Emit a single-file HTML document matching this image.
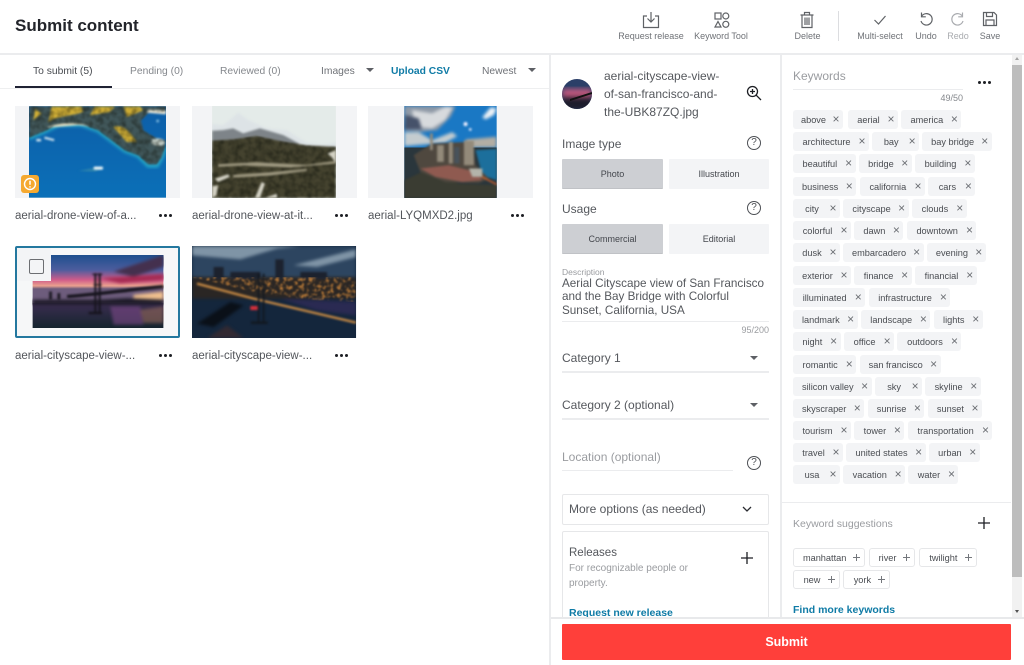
<!DOCTYPE html>
<html><head><meta charset="utf-8"><title>Submit content</title>
<style>
*{box-sizing:border-box}
html,body{margin:0;padding:0}
body{width:1024px;height:665px;position:relative;overflow:hidden;background:#fff;font-family:"Liberation Sans",sans-serif;color:#44474d}
#w{position:absolute;left:0;top:0;width:1024px;height:665px;overflow:hidden;background:#fff;filter:blur(.3px)}
.a{position:absolute;white-space:nowrap}
.c{transform:translateX(-50%)}
.ln{position:absolute;background:#ebecee}
.tl{font-size:9px;color:#6f7277;line-height:11px;top:30.500px}
.ic{position:absolute;fill:none;stroke:#5f6266;stroke-width:1.2}
.tab{font-size:10.300px;top:65.500px;line-height:12px;color:#85888d}
.fn{font-size:11.500px;line-height:14px;color:#53565b}
.thumb{position:absolute;background:#f3f4f6;height:92px;width:165px}
.thumb svg{position:absolute;display:block}
.dots{position:absolute;width:13px;height:3px}
.dots i{position:absolute;top:0;width:3px;height:3px;border-radius:50%;background:#1d1f24}
.dots i:nth-child(1){left:0}.dots i:nth-child(2){left:5px}.dots i:nth-child(3){left:10px}
.lab{font-size:12px;line-height:15px;color:#55585d;left:562px}
.btn{position:absolute;height:30px;width:101px;background:#f3f4f6;font-size:9px;line-height:30px;text-align:center;color:#44474d;border-radius:1px}
.btn.on{background:#cdcfd3;border-bottom:1px solid #c0c2c6}
.row{position:absolute;left:793px;display:flex;gap:3.4px;height:19px}
.row b{display:block;position:relative;height:19px;background:#f3f4f6;border-radius:3px;font-weight:400;font-size:9.200px;line-height:20px;color:#4a4d52;text-align:center;padding-right:12px;padding-left:3px;white-space:nowrap}
.row b::after{content:"\00d7";position:absolute;right:3px;top:0;width:8px;text-align:center;font-size:12px;line-height:19px;color:#6b6e73}
.row.s b{background:#fff;border:1px solid #e6e7e9;line-height:18px}
.row.s b::after{content:"";top:5px;right:4.500px;width:7px;height:7px;background:linear-gradient(#74777c,#74777c) center/7px 1px no-repeat,linear-gradient(#74777c,#74777c) center/1px 7px no-repeat}
.q{position:absolute;width:14px;height:14px;border:1.2px solid #4d5055;border-radius:50%;font-size:10px;line-height:12px;text-align:center;color:#4d5055}
.car{position:absolute;width:0;height:0;border-left:4px solid transparent;border-right:4px solid transparent;border-top:4px solid #5d6065}
.blue{color:#0f7ba6;font-weight:700}
</style></head><body><div id="w">

<svg style="position:absolute;width:0;height:0"><defs>
<filter id="b3" color-interpolation-filters="sRGB"><feGaussianBlur stdDeviation="5"/></filter>
<filter id="b2" color-interpolation-filters="sRGB"><feGaussianBlur stdDeviation="3"/></filter>
<filter id="dk" x="0" y="0" width="1" height="1" color-interpolation-filters="sRGB"><feTurbulence type="fractalNoise" baseFrequency=".06" numOctaves="2" seed="3"/><feColorMatrix values="0 0 0 0 .07 0 0 0 0 .08 0 0 0 0 .05 1.600 0 0 0 -.550"/><feComposite in2="SourceAlpha" operator="in"/><feGaussianBlur stdDeviation="2"/></filter>
<filter id="yl" x="0" y="0" width="1" height="1" color-interpolation-filters="sRGB"><feTurbulence type="fractalNoise" baseFrequency=".05" numOctaves="2" seed="8"/><feColorMatrix values="0 0 0 0 .82 0 0 0 0 .68 0 0 0 0 .20 2 0 0 0 -.850"/><feComposite in2="SourceAlpha" operator="in"/><feGaussianBlur stdDeviation="2.500"/></filter>
<filter id="or" x="0" y="0" width="1" height="1" color-interpolation-filters="sRGB"><feTurbulence type="fractalNoise" baseFrequency=".08" numOctaves="2" seed="5"/><feColorMatrix values="0 0 0 0 .90 0 0 0 0 .58 0 0 0 0 .24 3.500 0 0 0 -1.600"/><feComposite in2="SourceAlpha" operator="in"/><feGaussianBlur stdDeviation="2"/></filter>
<linearGradient id="sea" x1="0" y1="0" x2="0" y2="1"><stop offset="0" stop-color="#0d5ea8"/><stop offset="1" stop-color="#0b70b8"/></linearGradient>
<linearGradient id="sk" x1="0" y1="0" x2="0" y2="1"><stop offset="0" stop-color="#1d4f8e"/><stop offset=".3" stop-color="#4d5d9e"/><stop offset=".5" stop-color="#d05c8a"/><stop offset=".62" stop-color="#e9a08e"/><stop offset=".68" stop-color="#6d5c7c"/></linearGradient>
<linearGradient id="wa" x1="0" y1="0" x2="0" y2="1"><stop offset="0" stop-color="#3b2d50"/><stop offset="1" stop-color="#15242e"/></linearGradient>
</defs></svg>

<!-- header -->
<div class="a" style="left:15px;top:15px;font-size:17px;line-height:22px;font-weight:700;color:#23252b">Submit content</div>

<svg class="ic" style="left:642px;top:11px" width="18" height="18" viewBox="0 0 18 18"><path d="M5 5H1.500V16.500H16.500V5H13M9 1V11M5.500 7.500L9 11L12.500 7.500"/></svg>
<div class="a c tl" style="left:651px">Request release</div>
<svg class="ic" style="left:713px;top:11px" width="18" height="18" viewBox="0 0 18 18"><rect x="2" y="2" width="6" height="6"/><circle cx="12.800" cy="5" r="3"/><path d="M5 10.500L8 16H2Z"/><circle cx="12.800" cy="13.300" r="3"/></svg>
<div class="a c tl" style="left:721px">Keyword Tool</div>
<svg class="ic" style="left:799px;top:11px" width="16" height="18" viewBox="0 0 16 18"><path d="M1.500 4H14.500M5.500 4V1.500H10.500V4M3 4V16.500H13V4M6 6.500V14M8 6.500V14M10 6.500V14"/></svg>
<div class="a c tl" style="left:807.500px">Delete</div>
<div class="ln" style="left:838px;top:11px;width:1px;height:30px;background:#dcdde0"></div>
<svg class="ic" style="left:873px;top:14px" width="14" height="12" viewBox="0 0 14 12"><path d="M1.500 6L5.500 10L12.500 2"/></svg>
<div class="a c tl" style="left:880px">Multi-select</div>
<svg class="ic" style="left:918px;top:11px" width="16" height="16" viewBox="0 0 16 16"><path d="M3.500 5.500A5.700 5.700 0 1 1 3 10M3.500 1.500V5.800H7.800"/></svg>
<div class="a c tl" style="left:926px">Undo</div>
<svg class="ic" style="left:950px;top:11px;stroke:#a9abaf" width="16" height="16" viewBox="0 0 16 16"><path d="M12.500 5.500A5.700 5.700 0 1 0 13 10M12.500 1.500V5.800H8.200"/></svg>
<div class="a c tl" style="left:958px;color:#a9abaf">Redo</div>
<svg class="ic" style="left:982px;top:11px" width="16" height="16" viewBox="0 0 16 16"><path d="M1.500 1.500H12L14.500 4V14.500H1.500ZM4.500 1.500V5.500H10.500V1.500M4 14.500V9H12V14.500"/></svg>
<div class="a c tl" style="left:990px">Save</div>

<div class="ln" style="left:0;top:53px;width:1024px;height:2px"></div>

<!-- tabs -->
<div class="a tab" style="left:33px;color:#4a4d52">To submit (5)</div>
<div class="a tab" style="left:130px">Pending (0)</div>
<div class="a tab" style="left:220px">Reviewed (0)</div>
<div class="a tab" style="left:321px;color:#6f7277">Images</div>
<div class="car" style="left:366px;top:68px"></div>
<div class="a tab blue" style="left:391px">Upload CSV</div>
<div class="a tab" style="left:482px;color:#6f7277">Newest</div>
<div class="car" style="left:528px;top:68px"></div>
<div class="ln" style="left:0;top:87.500px;width:549px;height:1px;background:#eeeff0"></div>
<div class="a" style="left:15px;top:86px;width:97px;height:2px;background:#1f2233"></div>

<!-- thumb 1 -->
<div class="thumb" style="left:15px;top:106px">
<svg style="left:14px;top:0" width="137" height="92" viewBox="42 18 411 274">
<rect x="42" y="18" width="411" height="274" fill="url(#sea)"/>
<path d="M42 112L90 92L130 72H200L250 90L290 120L330 150L370 165L400 195H425L440 170L450 140" fill="none" stroke="#24a6c8" stroke-width="14" filter="url(#b3)"/>
<g filter="url(#b2)">
<path d="M42 18H453V35L400 38L378 60L385 90L420 112L453 120L450 140L440 170L425 192H400L370 165L330 150L290 120L250 90L200 72H130L90 92L42 112Z" fill="#41575a"/>
<path d="M100 66C125 45 170 50 205 34L200 18H110ZM295 80C325 70 345 95 365 125L335 125ZM225 45L285 35L300 18H240ZM335 50L385 30L375 18H325ZM55 60L80 40L60 25Z" fill="#cfae36"/>
<path d="M95 82C130 66 190 64 225 78L190 74L120 80Z" fill="#ece4c4"/>
<path d="M395 37L453 42V30L400 28Z" fill="#ece8d6"/>
<path d="M410 118C430 108 452 118 450 130C440 140 425 138 410 130Z" fill="#bfcbc4"/>
</g>
<path d="M42 18H453V35L400 38L378 60L385 90L420 112L453 120L450 140L440 170L425 192H400L370 165L330 150L290 120L250 90L200 72H130L90 92L42 112Z" fill="#000" filter="url(#dk)" opacity=".6"/>
<path d="M190 212L240 202L262 204L240 214Z" fill="#2d83ad" filter="url(#b2)"/>
<g filter="url(#b2)"><rect x="236" y="199" width="28" height="9" rx="3" fill="#f0f8fa"/><rect x="88" y="112" width="30" height="6" fill="#dcecf3" transform="rotate(15 100 115)"/><rect x="64" y="116" width="14" height="7" fill="#dcecf3"/><circle cx="428" cy="62" r="4" fill="#8cc4e4"/></g>
</svg>
<div class="a" style="left:6px;top:69px;width:18px;height:18px;background:#f5a930;border-radius:3px"></div>
<svg class="a" style="left:8px;top:71px" width="14" height="14" viewBox="0 0 14 14"><circle cx="7" cy="7" r="5.500" fill="none" stroke="#fff" stroke-width="1.400"/><path d="M7 3.800V7.800M7 9.300V10.500" stroke="#fff" stroke-width="1.500"/></svg>
</div>
<div class="a fn" style="left:15px;top:209px">aerial-drone-view-of-a...</div>
<div class="dots" style="left:159px;top:214px"><i></i><i></i><i></i></div>

<!-- thumb 2 -->
<div class="thumb" style="left:192px;top:106px">
<svg style="left:20px;top:0" width="124" height="92" viewBox="67 18 370 275">
<rect x="67" y="18" width="370" height="275" fill="#e4ebe9"/>
<g filter="url(#b2)">
<path d="M67 72L100 75L120 60L145 38L175 60L230 85L290 90L350 128L400 134L437 128V150H67Z" fill="#dde3e6"/>
<path d="M67 92L100 90L130 85L160 100L210 85L280 105L330 132H67Z" fill="#7e8489"/>
<path d="M67 122L130 118L200 108L280 125L350 136L437 140V293H67Z" fill="#45432f"/>
</g>
<path d="M67 122L130 118L200 108L280 125L350 136L437 140V293H67Z" fill="#000" filter="url(#dk)" opacity=".7"/>
<g filter="url(#b2)">
<path d="M85 192L200 186L350 194L437 182V190L300 202L160 196L85 200ZM130 224L240 216L350 206V212L240 226L130 232Z" fill="#a09a82"/>
<path d="M67 258L85 255L80 285L67 293ZM195 293L215 245L225 250L210 293ZM225 293L260 280L262 293ZM412 160L437 150V188L425 172ZM75 235L115 222L120 230L85 245Z" fill="#d5d3c6"/>
</g>
</svg>
</div>
<div class="a fn" style="left:192px;top:209px">aerial-drone-view-at-it...</div>
<div class="dots" style="left:335px;top:214px"><i></i><i></i><i></i></div>

<!-- thumb 3 -->
<div class="thumb" style="left:368px;top:106px">
<svg style="left:36px;top:0" width="93" height="92" viewBox="117 18 276 275">
<rect x="117" y="18" width="276" height="275" fill="#1a78c4"/>
<g filter="url(#b3)">
<path d="M117 18H270L255 50L215 90L170 95L117 92Z" fill="#8f99a6"/>
<path d="M140 30L200 40L240 20L262 22L240 60L200 85L150 80Z" fill="#d7dadd"/>
<path d="M120 45L160 55L170 88L117 88Z" fill="#46526a"/>
<path d="M350 52L375 22L393 25L385 45L360 58Z" fill="#eef2f6"/>
<path d="M117 96L160 96L200 120L260 96L275 108L240 128L117 138Z" fill="#c4cccf"/>
<path d="M300 118L393 110V142H300Z" fill="#b3aea4"/>
</g>
<path d="M117 142H393V293H117Z" fill="#2a363c"/>
<g filter="url(#b2)">
<path d="M330 150L393 146V240L350 225Z" fill="#1c6f9c"/>
<path d="M117 240L170 215L280 250L393 255V293H117Z" fill="#3a3c32"/>
<path d="M145 165L200 130L320 125L330 195L370 235L340 248L240 245L165 215Z" fill="#4f483f"/>
<path d="M165 205L250 195L330 215L350 240L290 245L210 230Z" fill="#8f5a50"/>
<path d="M295 122H325V195H295ZM250 125H262V190H250ZM194 100H202V150H194ZM215 135H235V185H215Z" fill="#938a7a"/><path d="M266 140H282V190H266Z" fill="#48525a"/><path d="M345 230L393 255V250L350 228Z" fill="#d8632c"/><circle cx="300" cy="72" r="6" fill="#eef"/><circle cx="314" cy="88" r="4" fill="#eef"/><path d="M310 205H350V230H320Z" fill="#b4b4aa"/>
</g>
</svg>
</div>
<div class="a fn" style="left:368px;top:209px">aerial-LYQMXD2.jpg</div>
<div class="dots" style="left:511px;top:214px"><i></i><i></i><i></i></div>

<!-- thumb 4 selected -->
<div class="thumb" style="left:15px;top:246px;border:2px solid #24789f;border-radius:2px;background:#f6f7f8">
<svg style="left:15px;top:7px" width="132" height="73" viewBox="96 60 394 220">
<rect x="96" y="60" width="394" height="150" fill="url(#sk)"/>
<rect x="96" y="205" width="394" height="75" fill="url(#wa)"/>
<g filter="url(#b3)">
<path d="M340 110L490 60V95L400 125Z" fill="#44304e"/>
<path d="M300 130L490 118V135L360 145Z" fill="#a52a52"/>
<path d="M400 180L490 170V195H400Z" fill="#f0c08e"/>
<path d="M96 195H300L380 190L490 195V210H96Z" fill="#1d1a28"/>
<path d="M330 215H420L430 270H340Z" fill="#7d4a88" opacity=".6"/>
<path d="M420 225L490 215V265L430 265Z" fill="#a0705c" opacity=".55"/>
</g>
<g filter="url(#b2)" fill="none" stroke="#16141d"><path d="M200 185C280 180 380 165 490 155" stroke-width="10"/><path d="M285 115V235M298 115V235" stroke-width="6"/><path d="M276 118H306M280 150H304" stroke-width="4"/><path d="M150 170V195M175 175V195" stroke-width="8"/><path d="M265 235H305" stroke-width="7"/></g>
</svg>
<div class="a" style="left:0;top:0;width:34px;height:33px;background:#f3f4f6"></div>
<div class="a" style="left:12px;top:11px;width:15px;height:15px;border:1.500px solid #6c6e72;border-radius:2px;background:#f3f4f6"></div>
</div>
<div class="a fn" style="left:15px;top:349px">aerial-cityscape-view-...</div>
<div class="dots" style="left:159px;top:354px"><i></i><i></i><i></i></div>

<!-- thumb 5 -->
<div class="thumb" style="left:192px;top:246px">
<svg style="left:0;top:0" width="164" height="92" viewBox="575 32 492 276">
<rect x="575" y="32" width="492" height="276" fill="#14263c"/>
<g filter="url(#b3)">
<path d="M575 32H1067V125H575Z" fill="#2d4560"/>
<path d="M575 60L720 72L830 40L900 32H575ZM880 90L1067 42V65L950 95Z" fill="#7f94a6"/>
<path d="M575 125H1067V190H575Z" fill="#2a2624"/>
<path d="M590 265L690 200L730 210L640 275Z" fill="#0a1018"/>
<path d="M680 270L730 308H620Z" fill="#3a2a30" opacity=".8"/>
<path d="M840 190L1067 200V240L950 225Z" fill="#2a2a52"/>
</g>
<path d="M640 95H670V130H640ZM825 72H850V130H825ZM900 110H980V130H900ZM690 110H780V130H690Z" fill="#1c222e" filter="url(#b2)"/>
<path d="M575 125H1067V200L900 190L760 170L620 135Z" fill="#000" filter="url(#or)" opacity=".7"/>
<g filter="url(#b2)" fill="none"><path d="M590 145L760 190L1067 262" stroke="#c88a44" stroke-width="7"/><path d="M790 115V265M775 115V265" stroke="#121820" stroke-width="5"/><path d="M752 262H802" stroke="#121820" stroke-width="7"/><path d="M750 218H772" stroke="#d8303a" stroke-width="12"/></g>
</svg>
</div>
<div class="a fn" style="left:192px;top:349px">aerial-cityscape-view-...</div>
<div class="dots" style="left:335px;top:354px"><i></i><i></i><i></i></div>

<!-- dividers -->
<div class="ln" style="left:549px;top:55px;width:2px;height:610px"></div>
<div class="ln" style="left:780px;top:55px;width:2px;height:562px"></div>
<div class="ln" style="left:782px;top:502px;width:229px;height:1px"></div>

<!-- details panel -->
<svg class="a" style="left:562px;top:79px" width="30" height="30" viewBox="0 0 30 30"><defs><clipPath id="cp"><circle cx="15" cy="15" r="15"/></clipPath></defs><g clip-path="url(#cp)"><rect width="30" height="30" fill="#2b3f68"/><g filter="url(#b2)"><rect y="10" width="30" height="8" fill="#c85a80"/><rect y="18" width="30" height="13" fill="#1d1d2c"/></g><path d="M8 20L30 13V15L8 22Z" fill="#111"/></g></svg>
<div class="a" style="left:604px;top:67px;font-size:12px;line-height:18px;color:#55585d">aerial-cityscape-view-<br>of-san-francisco-and-<br>the-UBK87ZQ.jpg</div>
<svg class="a" style="left:746px;top:85px" width="16" height="16" viewBox="0 0 16 16" fill="none" stroke="#1d1f24" stroke-width="1.300"><circle cx="6.500" cy="6.500" r="5"/><path d="M10.200 10.200L15 15M6.500 4V9M4 6.500H9"/></svg>

<div class="a lab" style="top:137px">Image type</div>
<div class="q" style="left:747px;top:136px">?</div>
<div class="btn on" style="left:562px;top:159px">Photo</div>
<div class="btn" style="left:669px;top:159px;width:100px">Illustration</div>
<div class="a lab" style="top:202px">Usage</div>
<div class="q" style="left:747px;top:201px">?</div>
<div class="btn on" style="left:562px;top:224px">Commercial</div>
<div class="btn" style="left:669px;top:224px;width:100px">Editorial</div>

<div class="a" style="left:562px;top:267px;font-size:8.500px;line-height:10px;color:#9a9ca0">Description</div>
<div class="a" style="left:562px;top:276.500px;font-size:11.700px;line-height:13.500px;color:#55585d">Aerial Cityscape view of San Francisco<br>and the Bay Bridge with Colorful<br>Sunset, California, USA</div>
<div class="ln" style="left:562px;top:321px;width:207px;height:1px"></div>
<div class="a" style="right:255px;top:325px;font-size:9px;line-height:11px;color:#9a9ca0">95/200</div>

<div class="a lab" style="top:351px">Category 1</div>
<div class="car" style="left:750px;top:356px"></div>
<div class="ln" style="left:562px;top:371px;width:207px;height:1.500px"></div>
<div class="a lab" style="top:398px">Category 2 (optional)</div>
<div class="car" style="left:750px;top:403px"></div>
<div class="ln" style="left:562px;top:418px;width:207px;height:1.500px"></div>
<div class="a lab" style="top:450px;color:#9a9ca0">Location (optional)</div>
<div class="ln" style="left:562px;top:469.500px;width:171px;height:1.500px"></div>
<div class="q" style="left:747px;top:456px">?</div>

<div class="a" style="left:562px;top:494px;width:207px;height:31px;border:1px solid #e6e7e9;border-radius:2px"></div>
<div class="a" style="left:569px;top:502px;font-size:12px;line-height:15px;color:#55585d">More options (as needed)</div>
<svg class="a" style="left:742px;top:506px" width="10" height="7" viewBox="0 0 10 7" fill="none" stroke="#2a2c31" stroke-width="1.300"><path d="M1 1L5 5L9 1"/></svg>

<div class="a" style="left:562px;top:531px;width:207px;height:90px;border:1px solid #e6e7e9;border-radius:2px"></div>
<div class="a" style="left:569px;top:546px;font-size:11.500px;line-height:14px;color:#55585d">Releases</div>
<div class="a" style="left:569px;top:561px;font-size:10px;line-height:15px;color:#9a9ca0">For recognizable people or<br>property.</div>
<svg class="a" style="left:741px;top:552px" width="12" height="12" viewBox="0 0 12 12" stroke="#1d1f24" stroke-width="1.300"><path d="M6 0V12M0 6H12"/></svg>
<div class="a blue" style="left:569px;top:605.500px;font-size:10.500px;line-height:14px">Request new release</div>

<!-- keywords -->
<div class="a" style="left:793px;top:69px;font-size:12px;line-height:15px;color:#9a9ca0">Keywords</div>
<div class="ln" style="left:793px;top:88.500px;width:170px;height:1.500px"></div>
<div class="a" style="right:61px;top:93px;font-size:9px;line-height:11px;color:#85888d">49/50</div>
<div class="dots" style="left:978px;top:81px"><i></i><i></i><i></i></div>

<div class="row" style="top:110px"><b style="width:50px">above</b><b style="width:50px;margin-left:1.600px">aerial</b><b style="width:60px">america</b></div>
<div class="row" style="top:132.200px"><b style="width:76px">architecture</b><b style="width:46.700px">bay</b><b style="width:69.300px">bay bridge</b></div>
<div class="row" style="top:154.400px"><b style="width:62.700px">beautiful</b><b style="width:52.700px">bridge</b><b style="width:59.700px">building</b></div>
<div class="row" style="top:176.600px"><b style="width:63.300px">business</b><b style="width:65.300px">california</b><b style="width:47px">cars</b></div>
<div class="row" style="top:198.800px"><b style="width:47px">city</b><b style="width:65.300px">cityscape</b><b style="width:54.700px">clouds</b></div>
<div class="row" style="top:221px"><b style="width:58px">colorful</b><b style="width:49px">dawn</b><b style="width:69.700px">downtown</b></div>
<div class="row" style="top:243.300px"><b style="width:47px">dusk</b><b style="width:80.300px">embarcadero</b><b style="width:58.700px">evening</b></div>
<div class="row" style="top:265.500px"><b style="width:58px">exterior</b><b style="width:57.300px">finance</b><b style="width:61.700px">financial</b></div>
<div class="row" style="top:287.700px"><b style="width:72.300px">illuminated</b><b style="width:81.700px">infrastructure</b></div>
<div class="row" style="top:310px"><b style="width:64.700px">landmark</b><b style="width:69.300px">landscape</b><b style="width:49px">lights</b></div>
<div class="row" style="top:332.300px"><b style="width:47.700px">night</b><b style="width:50px">office</b><b style="width:64px">outdoors</b></div>
<div class="row" style="top:354.500px"><b style="width:63.300px">romantic</b><b style="width:81px">san francisco</b></div>
<div class="row" style="top:376.700px"><b style="width:78.700px">silicon valley</b><b style="width:47px">sky</b><b style="width:55.300px">skyline</b></div>
<div class="row" style="top:399px"><b style="width:71.300px">skyscraper</b><b style="width:56.700px">sunrise</b><b style="width:54.300px">sunset</b></div>
<div class="row" style="top:421px"><b style="width:58px">tourism</b><b style="width:50px">tower</b><b style="width:84.700px">transportation</b></div>
<div class="row" style="top:443.200px"><b style="width:50px">travel</b><b style="width:79.300px">united states</b><b style="width:50.700px">urban</b></div>
<div class="row" style="top:465.300px"><b style="width:47px">usa</b><b style="width:61.700px">vacation</b><b style="width:50px">water</b></div>

<div class="a" style="left:793px;top:517px;font-size:10.500px;line-height:14px;color:#9a9ca0">Keyword suggestions</div>
<svg class="a" style="left:978px;top:517px" width="12" height="12" viewBox="0 0 12 12" stroke="#1d1f24" stroke-width="1.300"><path d="M6 0V12M0 6H12"/></svg>
<div class="row s" style="top:547.700px"><b style="width:72.300px">manhattan</b><b style="width:46.700px">river</b><b style="width:58.300px">twilight</b></div>
<div class="row s" style="top:569.800px"><b style="width:47px">new</b><b style="width:47px">york</b></div>
<div class="a blue" style="left:793px;top:602.500px;font-size:10.500px;line-height:14px">Find more keywords</div>

<!-- scrollbar -->
<div class="a" style="left:1012px;top:55px;width:10px;height:562px;background:#f1f1f1"></div>
<div class="a" style="left:1012px;top:65px;width:10px;height:512px;background:#bdbdbd"></div>
<div class="a" style="left:1014.500px;top:57px;width:0;height:0;border-left:2.500px solid transparent;border-right:2.500px solid transparent;border-bottom:3px solid #a3a3a3"></div>
<div class="a" style="left:1014.500px;top:610px;width:0;height:0;border-left:2.500px solid transparent;border-right:2.500px solid transparent;border-top:3px solid #505050"></div>

<!-- footer -->
<div class="a" style="left:551px;top:617px;width:473px;height:48px;background:#fff;border-top:2px solid #e8e9eb"></div>
<div class="a" style="left:562px;top:624px;width:449px;height:36px;background:#ff3f3a;border-radius:1px;color:#fff;font-weight:700;font-size:12.500px;line-height:37px;text-align:center">Submit</div>

</div></body></html>
